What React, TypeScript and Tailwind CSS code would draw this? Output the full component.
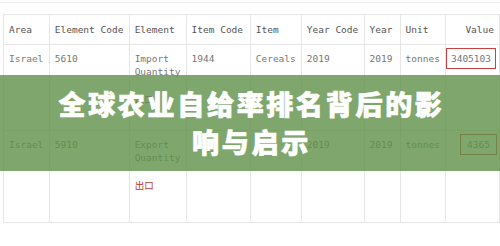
import React from "react";

const cols = [
  { label: "Area", w: "w-[46px]" },
  { label: "Element Code", w: "w-[80px]" },
  { label: "Element", w: "w-[57px]" },
  { label: "Item Code", w: "w-[65px]" },
  { label: "Item", w: "w-[50px]" },
  { label: "Year Code", w: "w-[63px]" },
  { label: "Year", w: "w-[37px]" },
  { label: "Unit", w: "w-[45px]" },
  { label: "Value", w: "w-[52px]" },
];

const rows = [
  {
    h: "h-[86px]",
    area: "Israel",
    code: "5610",
    element: ["Import", "Quantity"],
    note: "进口",
    item: "1944",
    name: "Cereals",
    yearCode: "2019",
    year: "2019",
    unit: "tonnes",
    value: "3405103",
    box: "mr-[2px] px-[4px] py-[3px]",
  },
  {
    h: "h-[92px]",
    area: "Israel",
    code: "5910",
    element: ["Export", "Quantity"],
    note: "出口",
    item: "",
    name: "",
    yearCode: "2019",
    year: "2019",
    unit: "tonnes",
    value: "4365",
    box: "mr-[1px] px-[6px] py-[3px]",
  },
];

function Cell({ w, children }: { w: string; children?: React.ReactNode }) {
  return (
    <td className={`${w} border border-[#e6e6e6] align-top px-[5px] pt-[7px] text-left whitespace-nowrap`}>
      {children}
    </td>
  );
}

export default function App() {
  return (
    <div className="relative w-[500px] h-[246px] overflow-hidden bg-white">
      <div className="h-[3px] border-b border-[#eeeeee]" />
      <div className="pl-[3px] pt-[11px]">
        <table
          className="border-collapse table-fixed text-[9.5px] leading-[13px] text-[#777]"
          style={{ fontFamily: '"DejaVu Sans Mono", "Liberation Mono", "Noto Sans CJK SC", monospace' }}
        >
          <thead>
            <tr className="h-[30px]">
              {cols.map((c, i) => (
                <th
                  key={c.label}
                  className={`${c.w} border border-[#e6e6e6] px-[5px] align-middle font-normal whitespace-nowrap text-[#555] ${
                    i === cols.length - 1 ? "text-right" : "text-left"
                  }`}
                >
                  {c.label}
                </th>
              ))}
            </tr>
          </thead>
          <tbody>
            {rows.map((r) => (
              <tr key={r.code} className={r.h}>
                <Cell w="w-[46px]">{r.area}</Cell>
                <Cell w="w-[80px]">{r.code}</Cell>
                <Cell w="w-[57px]">
                  <div className="flex flex-col">
                    <span>{r.element[0]}</span>
                    <span>{r.element[1]}</span>
                    <span className="mt-[15px] text-[#c0392b]" style={{ fontFamily: '"Noto Sans CJK SC", sans-serif' }}>
                      {r.note}
                    </span>
                  </div>
                </Cell>
                <Cell w="w-[65px]">{r.item}</Cell>
                <Cell w="w-[50px]">{r.name}</Cell>
                <Cell w="w-[63px]">{r.yearCode}</Cell>
                <Cell w="w-[37px]">{r.year}</Cell>
                <Cell w="w-[45px]">{r.unit}</Cell>
                <td className="w-[52px] border border-[#e6e6e6] align-top pt-[3px] pr-[1px] text-right">
                  <span className={`inline-block border-[1.5px] border-[#c8403f] ${r.box}`}>{r.value}</span>
                </td>
              </tr>
            ))}
          </tbody>
        </table>
      </div>

      <div className="absolute inset-x-0 top-[75px] h-[96px] bg-[#5f9148]/80 flex items-center justify-center">
        <h1
          className="text-center text-white font-black text-[27px] leading-[38px] tracking-[2.7px] pl-[3px] [-webkit-text-stroke:0.7px_white]"
          style={{ fontFamily: '"Noto Sans CJK SC", "Noto Sans", sans-serif' }}
        >
          全球农业自给率排名背后的影
          <br />
          响与启示
        </h1>
      </div>
    </div>
  );
}
